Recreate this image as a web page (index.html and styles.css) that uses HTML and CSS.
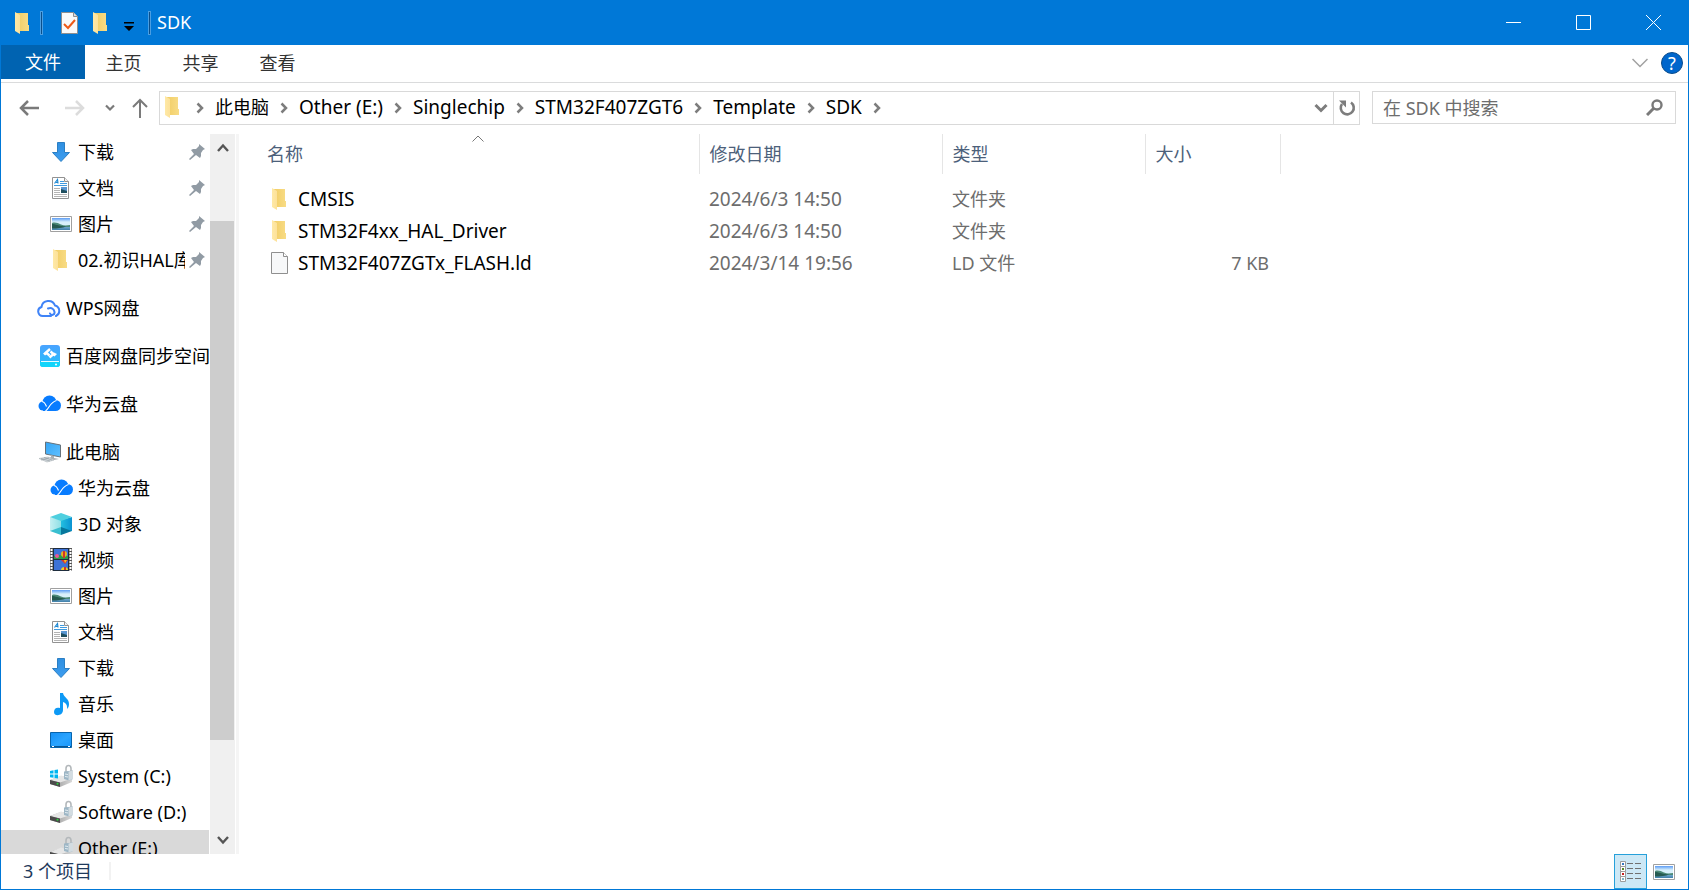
FILE: index.html
```html
<!DOCTYPE html>
<html lang="zh-CN">
<head>
<meta charset="utf-8">
<title>SDK</title>
<link rel="stylesheet" href="styles.css">
</head>
<body>
<svg class="sprite" aria-hidden="true">
  <defs>
    <linearGradient id="g-folder" x1="0" x2="1"><stop offset="0" stop-color="#f1cc62"/><stop offset="1" stop-color="#f8dc86"/></linearGradient>
    <linearGradient id="g-flap" x1="0" x2="1"><stop offset="0" stop-color="#ffe9a6"/><stop offset="1" stop-color="#fce19a"/></linearGradient>
    <linearGradient id="g-arrow" x1="0" x2="0" y1="0" y2="1"><stop offset="0" stop-color="#2f8fe0"/><stop offset="1" stop-color="#3c9df0"/></linearGradient>
    <linearGradient id="g-sky" x1="0" x2="0" y1="0" y2="1"><stop offset="0" stop-color="#5c9cf5"/><stop offset=".5" stop-color="#d8f0fb"/><stop offset="1" stop-color="#d8f0fb"/></linearGradient>
    <linearGradient id="g-lake" x1="0" x2="0" y1="0" y2="1"><stop offset="0" stop-color="#7fb2d8"/><stop offset="1" stop-color="#3f7fa8"/></linearGradient>
    <linearGradient id="g-sync" x1="0" x2="0" y1="0" y2="1"><stop offset="0" stop-color="#4aa2ff"/><stop offset="1" stop-color="#22c2fb"/></linearGradient>
    <linearGradient id="g-screen" x1="0" x2="1" y1="0" y2="1"><stop offset="0" stop-color="#35a5f5"/><stop offset="1" stop-color="#5fc0ff"/></linearGradient>
    <linearGradient id="g-desk" x1="0" x2="1" y1="0" y2="1"><stop offset="0" stop-color="#1590f5"/><stop offset=".55" stop-color="#2aa4ff"/><stop offset="1" stop-color="#1795fa"/></linearGradient>
    <linearGradient id="g-drive" x1="0" x2="1"><stop offset="0" stop-color="#8d8d8d"/><stop offset="1" stop-color="#d9d9d9"/></linearGradient>
    <linearGradient id="g-left" x1="0" x2="1"><stop offset="0" stop-color="#c5f0f2"/><stop offset="1" stop-color="#8fe0e6"/></linearGradient>
    <linearGradient id="g-right" x1="0" x2="1"><stop offset="0" stop-color="#23bfe0"/><stop offset="1" stop-color="#0a93d2"/></linearGradient>
  </defs>
  <symbol id="folder" viewBox="0 0 24 24"><path d="M5 2h12v12h1v6H8z" fill="url(#g-folder)"/><path d="M4 1l5 3v19l-5-3z" fill="url(#g-flap)"/></symbol>
  <symbol id="download" viewBox="0 0 24 24"><path d="M8.500 2.500h7v10h5L12 21.500l-8.500-9h5z" fill="url(#g-arrow)" stroke="#2b7fc4"/></symbol>
  <symbol id="document" viewBox="0 0 24 24"><path d="M3.500 1.500h12l4 4v17h-16z" fill="#fff" stroke="#929292"/><path d="M15.500 1.500v4h4" fill="#f2f2f2" stroke="#929292"/><path d="M5.500 7.500l3-4 .5 4M7 6.500h2" fill="none" stroke="#1e88d2" stroke-width="1.200"/><path d="M11 5.500h4M11 7.500h7M5 9.500h13" stroke="#3f9be0"/><path d="M5 12.500h6M5 14.500h6M5 16.500h6M5 18.500h13M5 20.500h13" stroke="#b4b4b4"/><path d="M12 11h6v6h-6z" fill="#5a97d2"/><path d="M12 13l3 1 3 1v2h-6z" fill="#1f4f5f"/></symbol>
  <symbol id="picture" viewBox="0 0 24 24"><path d="M1.500 4.500h21v15h-21z" fill="#fff" stroke="#a0a0a0"/><path d="M3 6h18v8H3z" fill="url(#g-sky)"/><path d="M3 14h18v4H3z" fill="url(#g-lake)"/><path d="M3 11c3-1 6 0 9 1.500s6 1 9 .5v2H3z" fill="#4c8a78"/><path d="M3 12c3 0 7 2 14 2.500-3 1.500-9 2-14 2z" fill="#265a50"/></symbol>
  <symbol id="wps" viewBox="0 0 24 24"><path d="M14 20H6a4.600 4.600 0 0 1-1.500-9A7 7 0 0 1 18 9.500c5.500 1.500 5.500 8.500 1 10.500M11 12.500c4-1.500 6 1 6.500 3.500.5 3-3.500 4-4.500 1.500" fill="none" stroke="#3f83f7" stroke-width="2" stroke-linecap="round"/></symbol>
  <symbol id="baidu" viewBox="0 0 24 24"><rect x="3" y="1" width="20" height="22" rx="3" fill="url(#g-sync)"/><path d="M3 18h20v2a3 3 0 0 1-3 3H6a3 3 0 0 1-3-3z" fill="#12d5fa"/><path d="M4 17.500h18" stroke="#e8fbff"/><circle cx="19" cy="20.500" r="1" fill="#fff"/><path d="M13 5L9 8.500l3.500 3M13.500 7.500l3 2.500-4 3.500" fill="none" stroke="#fff" stroke-width="2.400"/><path d="M9 7.500l-3 2 2 2 3-2zM17 8.500l3 1.500-2.500 2.500-3-2z" fill="#fff"/></symbol>
  <symbol id="huawei" viewBox="0 0 24 24"><circle cx="6" cy="14" r="4.500" fill="#087cff"/><circle cx="12.500" cy="10.500" r="7" fill="#087cff"/><circle cx="18.500" cy="13.500" r="5.500" fill="#087cff"/><path d="M6 14h13v5H6z" fill="#087cff"/><path d="M5 9.500c2.500.3 3.500 2.500 4.500 5M8.500 19c3.500-2 4-8.500 11-10.500" fill="none" stroke="#fff" stroke-width="1.200"/></symbol>
  <symbol id="computer" viewBox="0 0 24 24"><path d="M8.500 2l15 3v12l-15-3z" fill="url(#g-screen)" stroke="#66727b"/><path d="M14 15l3 1v2l5 1-5 1-5-2 2-1z" fill="#aab1b5"/><path d="M2 18.500l9-1.500 6 3-7 2z" fill="#d8dde0" stroke="#aab1b5" stroke-width=".6"/><path d="M4 18.500l9 2.500M7 17.500l8 2.500M4 20l8-2" stroke="#959fa6" stroke-width=".7"/></symbol>
  <symbol id="cube" viewBox="0 0 24 24"><path d="M1 5l11 3v11L1 19z" fill="url(#g-left)"/><path d="M12 8l11-3v14l-11 0z" fill="url(#g-right)"/><path d="M1 5l11-4 11 4-11 4z" fill="#4fcfdf"/><path d="M1 19l11-4v8z" fill="#39bfd0"/><path d="M12 15l11 4-11 4z" fill="#07789d"/></symbol>
  <symbol id="video" viewBox="0 0 24 24"><path d="M1 0h22v23H1z" fill="#555"/><path d="M2.500 1v22M21.500 1v22" stroke="#fff" stroke-width="2" stroke-dasharray="2 1"/><path d="M4 0h16v23H4z" fill="#1f2d3e"/><path d="M5 1h14v10H5zM5 12h14v10H5z" fill="#3d72d6"/><path d="M5 8l5-1 9 1v3H5z" fill="#2b9b4b"/><circle cx="8" cy="8" r="2" fill="#ec5599"/><circle cx="15" cy="6" r="3" fill="#e6b51c"/><path d="M14 3h2v7h-2z" fill="#d33428"/><path d="M12 12h7l-3 4z" fill="#dc392b"/><path d="M15 12h3l-2 3z" fill="#efc51e"/><path d="M12 22c0-4 7-4 7 0z" fill="#f0cf22"/><path d="M15 19h2v3h-2z" fill="#d33428"/></symbol>
  <symbol id="music" viewBox="0 0 24 24"><path d="M11 1h3c1 5 6 5 6 11 0 2-.6 4-2 5 .5-4-1-6-4-7v8c0 6-9 7-9 2 0-4 3-5 6-4z" fill="#0d99f5"/></symbol>
  <symbol id="desktop" viewBox="0 0 24 24"><path d="M1.500 4.500h21v15h-21z" fill="url(#g-desk)" stroke="#0764ad"/><path d="M2 18.500h20" stroke="#075593"/><path d="M3 18.500h2M19 18.500h2" stroke="#fff"/></symbol>
  <symbol id="drive" viewBox="0 0 24 24"><path d="M1 16l11-4 11 2v4l-12 5-10-3z" fill="url(#g-drive)"/><path d="M1 16l11-4.500 11 3-12 4z" fill="#e6e6e6"/><path d="M1 16l10 2.500V23L1 20z" fill="#4b4b4b"/><circle cx="8.500" cy="19.800" r="1" fill="#29d43b"/><path d="M17 8V4.500c0-4 5-4 5 0V8" fill="none" stroke="#b3b8bb" stroke-width="1.600"/><path d="M15 7.500l9-1V15l-4 1.500-5-1.500z" fill="#9db6c5"/><path d="M19.500 7.500l4.500-1V15l-4.500 1.500z" fill="#d3dce1"/><path d="M16 10l3 .5M16 12.500l3 .5" stroke="#e4edf2"/></symbol>
  <symbol id="windows" viewBox="0 0 24 24"><path d="M1 7l3.500-.7v3.200H1zM5.500 6L9 5.400v4.100H5.500zM1 10.500h3.500v3.300L1 13.200zM5.500 10.500H9v4l-3.500-.5z" fill="#00b5f0"/></symbol>
  <symbol id="file" viewBox="0 0 24 24"><path d="M3.500 1.500h12l4 4v17h-16z" fill="#f7f8f9" stroke="#8f8f8f"/><path d="M15.500 1.500v4h4" fill="#fff" stroke="#8f8f8f"/></symbol>
  <symbol id="pin" viewBox="0 0 16 16"><path d="M10 0l6 5-2 1-2 3v3l-1 2-4-3-6 5-1-1 5-5-3-4 2-1h3l3-3z" fill="#919ba4"/></symbol>
  <symbol id="sep" viewBox="0 0 8 12"><path d="M1.500 1.500L6 6l-4.500 4.500" fill="none" stroke="#7d7d7d" stroke-width="2.500"/></symbol>
</svg>

<div class="window">
  <header class="titlebar">
    <svg class="icon"><use href="#folder"/></svg>
    <span class="divider"></span>
    <button class="quick quick-first" aria-label="属性"><svg class="icon" viewBox="0 0 24 24"><path d="M4.500 1.500h12l4 4v17h-16z" fill="#fafafa" stroke="#8f8f8f"/><path d="M16.500 1.500v4h4" fill="#ddd" stroke="#8f8f8f"/><path d="M7 13l4 4 7-8" fill="none" stroke="#ee5a18" stroke-width="2"/></svg></button>
    <button class="quick" aria-label="新建文件夹"><svg class="icon"><use href="#folder"/></svg></button>
    <button class="quick quick-menu" aria-label="自定义快速访问工具栏"><svg width="10" height="9" viewBox="0 0 10 9"><path d="M0 0h10v1.500H0zM0 4h10L5 9z"/></svg></button>
    <span class="divider"></span>
    <h1 class="title">SDK</h1>
    <div class="controls">
      <button aria-label="最小化"><svg width="15" height="15" viewBox="0 0 15 15"><path d="M0 7.500h15"/></svg></button>
      <button aria-label="最大化"><svg width="15" height="15" viewBox="0 0 15 15"><path d="M.5.5h14v14H.5z"/></svg></button>
      <button aria-label="关闭"><svg width="15" height="15" viewBox="0 0 15 15"><path d="M0 0l15 15M15 0L0 15"/></svg></button>
    </div>
  </header>

  <nav class="ribbon">
    <button class="tab tab-file">文件</button>
    <button class="tab">主页</button>
    <button class="tab">共享</button>
    <button class="tab">查看</button>
    <div class="ribbon-end">
      <button aria-label="展开功能区"><svg width="16" height="10" viewBox="0 0 16 10"><path d="M.5 1L8 8.500 15.500 1" fill="none" stroke="#a0a0a0" stroke-width="1.500"/></svg></button>
      <button class="help" aria-label="帮助">?</button>
    </div>
  </nav>

  <div class="addressbar">
    <div class="history">
      <button aria-label="后退"><svg width="20" height="16" viewBox="0 0 20 16"><path d="M20 8H2M9 1L2 8l7 7" fill="none" stroke="#7a7a7a" stroke-width="2.500"/></svg></button>
      <button aria-label="前进"><svg width="20" height="16" viewBox="0 0 20 16"><path d="M0 8h18M11 1l7 7-7 7" fill="none" stroke="#dcdcdc" stroke-width="2.500"/></svg></button>
      <button aria-label="最近位置"><svg width="10" height="8" viewBox="0 0 10 8"><path d="M1 1.500l4 4 4-4" fill="none" stroke="#7a7a7a" stroke-width="2.200"/></svg></button>
      <button aria-label="上移"><svg width="16" height="20" viewBox="0 0 16 20"><path d="M8 20V2M1 9l7-7 7 7" fill="none" stroke="#7a7a7a" stroke-width="2"/></svg></button>
    </div>
    <div class="path">
      <div class="crumbs">
        <svg class="icon"><use href="#folder"/></svg>
        <svg class="sep"><use href="#sep"/></svg><a href="#" class="place">此电脑</a>
        <svg class="sep"><use href="#sep"/></svg><a href="#">Other (E:)</a>
        <svg class="sep"><use href="#sep"/></svg><a href="#">Singlechip</a>
        <svg class="sep"><use href="#sep"/></svg><a href="#">STM32F407ZGT6</a>
        <svg class="sep"><use href="#sep"/></svg><a href="#">Template</a>
        <svg class="sep"><use href="#sep"/></svg><a href="#">SDK</a>
        <svg class="sep"><use href="#sep"/></svg>
      </div>
      <div class="path-end">
        <button aria-label="以前的位置"><svg width="14" height="10" viewBox="0 0 14 10"><path d="M1.500 2L7 7.500 12.500 2" fill="none" stroke="#7d7d7d" stroke-width="3"/></svg></button>
        <button class="refresh" aria-label="刷新"><svg width="18" height="18" viewBox="0 0 18 18"><path d="M13 3.500A6.500 6.500 0 1 1 4 5" fill="none" stroke="#7d7d7d" stroke-width="2.600"/><path d="M1 1.500h7v7z" fill="#7d7d7d"/></svg></button>
      </div>
    </div>
    <label class="search">
      <input type="text" placeholder="在 SDK 中搜索" aria-label="在 SDK 中搜索">
      <svg width="17" height="17" viewBox="0 0 17 17"><circle cx="11" cy="6" r="4.500" fill="none" stroke="#7a7a7a" stroke-width="2.400"/><path d="M8 9l-7 7" stroke="#7a7a7a" stroke-width="3"/></svg>
    </label>
  </div>

  <div class="body">
    <nav class="tree">
      <a class="node child" href="#"><svg class="icon"><use href="#download"/></svg><span>下载</span><svg class="pin"><use href="#pin"/></svg></a>
      <a class="node child" href="#"><svg class="icon"><use href="#document"/></svg><span>文档</span><svg class="pin"><use href="#pin"/></svg></a>
      <a class="node child" href="#"><svg class="icon"><use href="#picture"/></svg><span>图片</span><svg class="pin"><use href="#pin"/></svg></a>
      <a class="node child" href="#"><svg class="icon"><use href="#folder"/></svg><span>02.初识HAL库</span><svg class="pin"><use href="#pin"/></svg></a>
      <a class="node root" href="#"><svg class="icon"><use href="#wps"/></svg><span>WPS网盘</span></a>
      <a class="node root" href="#"><svg class="icon"><use href="#baidu"/></svg><span>百度网盘同步空间</span></a>
      <a class="node root" href="#"><svg class="icon"><use href="#huawei"/></svg><span>华为云盘</span></a>
      <a class="node root" href="#"><svg class="icon"><use href="#computer"/></svg><span>此电脑</span></a>
      <a class="node child" href="#"><svg class="icon"><use href="#huawei"/></svg><span>华为云盘</span></a>
      <a class="node child" href="#"><svg class="icon"><use href="#cube"/></svg><span>3D 对象</span></a>
      <a class="node child" href="#"><svg class="icon"><use href="#video"/></svg><span>视频</span></a>
      <a class="node child" href="#"><svg class="icon"><use href="#picture"/></svg><span>图片</span></a>
      <a class="node child" href="#"><svg class="icon"><use href="#document"/></svg><span>文档</span></a>
      <a class="node child" href="#"><svg class="icon"><use href="#download"/></svg><span>下载</span></a>
      <a class="node child" href="#"><svg class="icon"><use href="#music"/></svg><span>音乐</span></a>
      <a class="node child" href="#"><svg class="icon"><use href="#desktop"/></svg><span>桌面</span></a>
      <a class="node child" href="#"><svg class="icon"><use href="#drive"/><use href="#windows"/></svg><span>System (C:)</span></a>
      <a class="node child" href="#"><svg class="icon"><use href="#drive"/></svg><span>Software (D:)</span></a>
      <a class="node child selected" href="#"><svg class="icon"><use href="#drive"/></svg><span>Other (E:)</span></a>
    </nav>
    <div class="scrollbar">
      <button aria-label="向上滚动"><svg width="12" height="10" viewBox="0 0 12 10"><path d="M1 8l5-5.500L11 8" fill="none" stroke="#555" stroke-width="2.400"/></svg></button>
      <div class="track"><div class="before"></div><div class="thumb"></div><div class="after"></div></div>
      <button aria-label="向下滚动"><svg width="12" height="10" viewBox="0 0 12 10"><path d="M1 2l5 5.500L11 2" fill="none" stroke="#555" stroke-width="2.400"/></svg></button>
    </div>
    <main class="files">
      <table>
        <colgroup><col class="c-name"><col class="c-date"><col class="c-type"><col class="c-size"></colgroup>
        <thead>
          <tr><th class="sorted">名称<svg class="sort" width="12" height="7" viewBox="0 0 12 7"><path d="M.5 6.500L6 1l5.500 5.500" fill="none" stroke="#777"/></svg></th><th>修改日期</th><th>类型</th><th>大小</th></tr>
        </thead>
        <tbody>
          <tr><td><div class="name"><svg class="icon"><use href="#folder"/></svg>CMSIS</div></td><td class="date">2024/6/3 14:50</td><td>文件夹</td><td></td></tr>
          <tr><td><div class="name"><svg class="icon"><use href="#folder"/></svg>STM32F4xx_HAL_Driver</div></td><td class="date">2024/6/3 14:50</td><td>文件夹</td><td></td></tr>
          <tr><td><div class="name"><svg class="icon"><use href="#file"/></svg>STM32F407ZGTx_FLASH.ld</div></td><td class="date">2024/3/14 19:56</td><td>LD 文件</td><td>7 KB</td></tr>
        </tbody>
      </table>
    </main>
  </div>

  <footer class="status">
    <span class="count">3 个项目</span>
    <div class="views">
      <button class="active" aria-label="详细信息"><svg width="22" height="22" viewBox="0 0 22 22"><path d="M.5.500h5v5h-5zM.5 5.500h5v5h-5zM.5 10.500h5v5h-5zM.5 15.500h5v5h-5z" fill="#fff" stroke="#9c9c9c"/><path d="M2 2h2v2H2z" fill="#3678c0"/><path d="M2 7h2v2H2z" fill="#5b8a2b"/><path d="M2 12h2v2H2z" fill="#c82020"/><path d="M2 17h2v2H2z" fill="#7db4c8"/><path d="M7 2.500h6M15 2.500h6M7 7.500h6M15 7.500h6M7 12.500h6M15 12.500h6M7 17.500h6M15 17.500h6" stroke="#707070"/></svg></button>
      <button aria-label="大缩略图"><svg class="icon"><use href="#picture"/></svg></button>
    </div>
  </footer>
</div>
</body>
</html>
```
FILE: styles.css
```css
* { box-sizing: border-box; }

body {
  margin: 0;
  font: 18px/24px "Noto Sans", "Noto Sans CJK SC", sans-serif;
  color: #000;
  background: #fff;
}

button {
  display: flex;
  align-items: center;
  justify-content: center;
  padding: 0;
  border: 0;
  background: none;
  font: inherit;
  color: inherit;
}

a { color: inherit; text-decoration: none; }
svg { flex: none; display: block; }
.sprite { position: absolute; width: 0; height: 0; }
.icon { width: 24px; height: 24px; }

.window {
  display: flex;
  flex-direction: column;
  height: 100vh;
  overflow: hidden;
  border: 1px solid #0078d7;
  border-top: 0;
}

.titlebar {
  display: flex;
  flex: none;
  align-items: center;
  height: 45px;
  padding-left: 10px;
  background: #0078d7;
}
.divider { width: 3px; height: 24px; margin-left: 5px; border: 1px solid #4a9ee2; background: #0a4f8c; }
.quick { width: 32px; height: 32px; }
.quick-first { margin-left: 10px; }
.quick-menu { width: 24px; padding-top: 8px; }
.divider + .title { margin: 0 0 2px 6px; font-size: 18px; font-weight: 400; color: #fff; }
.quick-menu + .divider { margin-left: 7px; }
.controls { display: flex; height: 100%; margin-left: auto; }
.controls button { width: 70px; }
.controls svg { fill: none; stroke: #fff; }

.ribbon {
  display: flex;
  flex: none;
  height: 38px;
  border-bottom: 1px solid #dadbdc;
}
.tab { width: 77px; height: 36px; color: #333; }
.tab-file { width: 84px; height: 34px; background: #0063b1; color: #fff; }
.ribbon-end { display: flex; align-items: center; gap: 13px; height: 36px; margin-left: auto; padding-right: 5px; }
.help { width: 22px; height: 22px; border: 1px solid #0a4c8c; border-radius: 50%; background: #0066cc; color: #fff; }

.addressbar { display: flex; flex: none; padding: 8px 12px 9px 0; }
.history { display: flex; align-items: center; width: 158px; padding-left: 18px; }
.history button:nth-child(2) { margin-left: 26px; }
.history button:nth-child(3) { margin-left: 20px; }
.history button:nth-child(4) { margin-left: 17px; }

.path {
  display: flex;
  flex: 1;
  align-items: center;
  height: 34px;
  border: 1px solid #d9d9d9;
  white-space: nowrap;
}
.crumbs { display: flex; align-items: center; padding: 0 0 2px 1px; font-size: 19px; }
.place { font-size: 18px; }
.sep { width: 8px; height: 12px; margin: 1px 11px 0; }
.path-end { display: flex; align-self: stretch; margin-left: auto; }
.path-end button { width: 24px; }
.path-end .refresh { width: 26px; border-left: 1px solid #d9d9d9; }
.search {
  display: flex;
  align-items: center;
  width: 304px;
  height: 33px;
  margin-left: 12px;
  padding: 0 12px 0 10px;
  border: 1px solid #d9d9d9;
}
.search input { flex: 1; min-width: 0; padding: 0; border: 0; outline: 0; font: inherit; background: none; }
.search input::placeholder { color: #6d6d6d; opacity: 1; }

.body { display: flex; flex: 1; min-height: 0; }
.tree { width: 209px; padding-right: 1px; overflow: hidden; }
.node { display: flex; align-items: center; height: 36px; padding-left: 48px; white-space: nowrap; }
.node span { flex: 1; min-width: 0; margin-left: 5px; overflow: hidden; }
.root { margin-top: 12px; padding-left: 36px; }
.selected { background: #d9d9d9; }
.pin { width: 16px; height: 16px; margin: 0 4px; }

.scrollbar { display: flex; flex-direction: column; width: 25px; background: #f0f0f0; }
.scrollbar button { height: 28px; }
.track { display: flex; flex: 1; flex-direction: column; }
.before { flex: 59; }
.thumb { flex: 519; margin-right: 1px; background: #cdcdcd; }
.after { flex: 86; }

.files { flex: 1; margin-left: 1px; border-left: 3px solid #f5f5f5; }
table { width: 1041px; border-collapse: collapse; table-layout: fixed; }
.c-name { width: 460px; }
.c-date { width: 243px; }
.c-type { width: 203px; }
.c-size { width: 135px; }
th {
  position: relative;
  height: 40px;
  padding: 0 0 0 10px;
  border-right: 1px solid #e5e5e5;
  font-weight: 400;
  text-align: left;
  color: #4c607a;
}
th.sorted { padding-left: 28px; }
.sort { position: absolute; top: 1px; left: 50%; margin-left: 3px; }
tbody::before { content: ""; display: block; height: 9px; }
td { height: 32px; padding: 0 0 0 10px; color: #6d6d6d; white-space: nowrap; }
td:first-child { padding-left: 29px; }
td:last-child { padding-right: 11px; text-align: right; }
.date { font-size: 19px; }
.name { display: flex; align-items: center; gap: 6px; font-size: 19px; color: #000; }

.status { display: flex; flex: none; align-items: center; height: 35px; color: #1e395b; }
.count { margin: 0 0 2px 22px; padding-right: 17px; border-right: 2px solid #f2f2f2; line-height: 18px; }
.views { display: flex; height: 100%; margin-left: auto; padding-right: 7px; }
.views button { width: 34px; }
.views .active { width: 33px; border: 1px solid #26a0da; background: #cce8f6; }
```
